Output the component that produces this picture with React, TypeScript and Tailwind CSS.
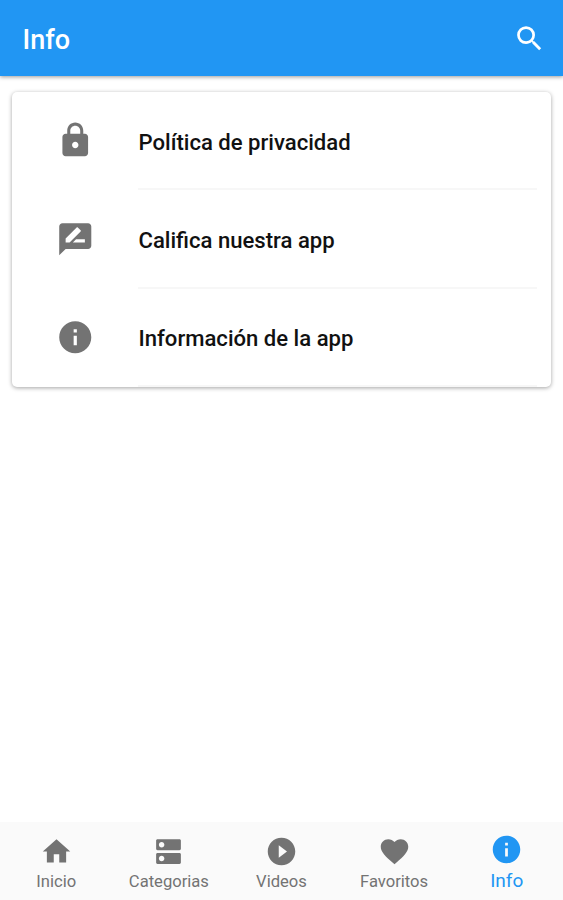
import { MdHome, MdDns, MdPlayCircleFilled, MdFavorite, MdInfo, MdLock, MdRateReview, MdSearch } from 'react-icons/md';

const rows = [
  { Icon: MdLock, label: 'Política de privacidad' },
  { Icon: MdRateReview, label: 'Califica nuestra app' },
  { Icon: MdInfo, label: 'Información de la app' },
];

const tabs = [
  { Icon: MdHome, label: 'Inicio' },
  { Icon: MdDns, label: 'Categorias' },
  { Icon: MdPlayCircleFilled, label: 'Videos' },
  { Icon: MdFavorite, label: 'Favoritos' },
];

export default function App() {
  return (
    <div className="flex h-[900px] w-full flex-col overflow-hidden bg-white font-['Roboto',sans-serif]">
      <header className="flex h-[76px] shrink-0 items-center justify-between bg-[#2196f3] pr-[17px] pl-[22.5px] text-white shadow-[0_1px_4px_rgba(0,0,0,0.4)]">
        <h1 className="mt-[5px] text-[27px] font-medium">Info</h1>
        <MdSearch size={33} />
      </header>
      <main className="flex-1 px-3 pt-4">
        <div className="h-[295px] rounded-[5px] bg-white shadow-[0_1px_4px_rgba(0,0,0,0.36)]">
          {rows.map(({ Icon, label }) => (
            <div key={label} className="flex h-[98.3px] pr-[14px]">
              <div className="flex w-[126px] shrink-0 items-center justify-center pb-px text-[#737373]">
                <Icon size={38.5} />
              </div>
              <div className="flex flex-1 items-center border-b-2 border-[#f7f7f7] pt-1 pl-[0.5px] text-[22.1px] font-medium text-[#111]">{label}</div>
            </div>
          ))}
        </div>
      </main>
      <nav className="grid h-[78px] shrink-0 grid-cols-5 bg-[#fafafa] text-[#737373]">
        {tabs.map(({ Icon, label }) => (
          <div key={label} className="flex flex-col items-center pt-[13px]">
            <Icon size={33} />
            <span className="mt-1 text-[16.6px] leading-5">{label}</span>
          </div>
        ))}
        <div className="flex flex-col items-center pt-[11px] text-[#2196f3]">
          <MdInfo size={33} />
          <span className="mt-[5px] text-[19px] leading-5">Info</span>
        </div>
      </nav>
    </div>
  );
}
